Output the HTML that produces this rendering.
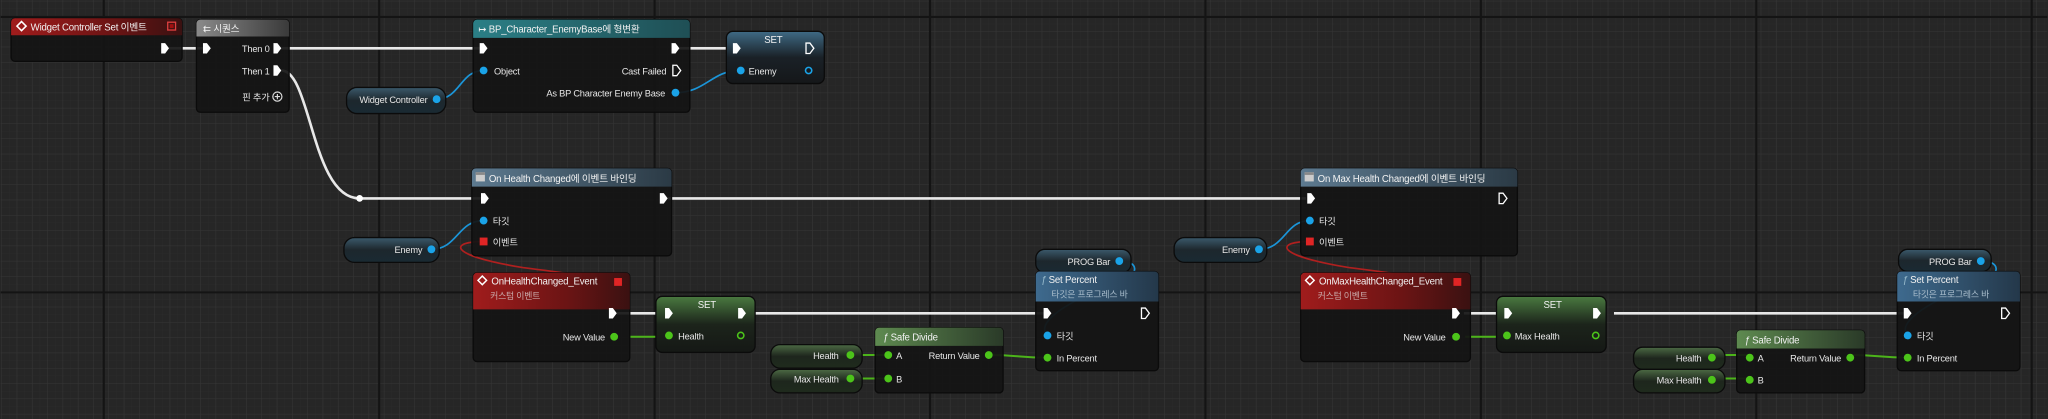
<!DOCTYPE html>
<html><head><meta charset="utf-8"><style>
html,body{margin:0;padding:0;background:#262626;overflow:hidden}
svg{display:block}
text{font-family:"Liberation Sans","Noto Sans CJK KR",sans-serif;font-size:7.1px;letter-spacing:-0.15px;fill:#e6e6e6}
.h{font-size:7.4px;fill:#f2f2f2}
.s{font-size:6.8px;fill:#c9a9a9}
</style></head><body>
<svg width="2048" height="419" viewBox="0 0 1568 321" xmlns="http://www.w3.org/2000/svg">
<defs>
<pattern id="g1" width="5.861" height="5.861" patternUnits="userSpaceOnUse" x="1" y="1">
<path d="M5.861 0V5.861H0" fill="none" stroke="#2b2b2b" stroke-width="0.6"/></pattern>
<pattern id="g2" width="11.72" height="11.72" patternUnits="userSpaceOnUse" x="1" y="1">
<path d="M11.72 0V11.72H0" fill="none" stroke="#353535" stroke-width="0.8"/></pattern>
<linearGradient id="red" x1="0" y1="0" x2="1" y2="0"><stop offset="0" stop-color="#a01c1c"/><stop offset="0.6" stop-color="#6b1414"/><stop offset="1" stop-color="#3a1111"/></linearGradient>
<linearGradient id="gray" x1="0" y1="0" x2="1" y2="0"><stop offset="0" stop-color="#8a8a8a"/><stop offset="1" stop-color="#3a3a3a"/></linearGradient>
<linearGradient id="teal" x1="0" y1="0" x2="1" y2="0"><stop offset="0" stop-color="#2b7f86"/><stop offset="1" stop-color="#1f4f55"/></linearGradient>
<linearGradient id="bg" x1="0" y1="0" x2="1" y2="0"><stop offset="0" stop-color="#5d7a90"/><stop offset="1" stop-color="#2b3a45"/></linearGradient>
<linearGradient id="blue" x1="0" y1="0" x2="1" y2="0"><stop offset="0" stop-color="#3e6a8e"/><stop offset="1" stop-color="#24384a"/></linearGradient>
<linearGradient id="grn" x1="0" y1="0" x2="1" y2="0"><stop offset="0" stop-color="#5e8a50"/><stop offset="1" stop-color="#2a3a28"/></linearGradient>
<linearGradient id="setg" x1="0" y1="0" x2="0" y2="1"><stop offset="0" stop-color="#4a7a40"/><stop offset="0.5" stop-color="#1c241b"/><stop offset="1" stop-color="#151815"/></linearGradient>
<linearGradient id="setb" x1="0" y1="0" x2="0" y2="1"><stop offset="0" stop-color="#3f6a85"/><stop offset="0.5" stop-color="#1a2127"/><stop offset="1" stop-color="#151719"/></linearGradient>
<linearGradient id="varb" x1="0" y1="0" x2="0" y2="1"><stop offset="0" stop-color="#3b5a6c"/><stop offset="0.5" stop-color="#1d272d"/><stop offset="1" stop-color="#1a2a33"/></linearGradient>
<linearGradient id="varg" x1="0" y1="0" x2="0" y2="1"><stop offset="0" stop-color="#4c6a44"/><stop offset="0.5" stop-color="#1e261d"/><stop offset="1" stop-color="#1f2b1d"/></linearGradient>
<path id="ex" d="M-3,-4h3l3,4l-3,4h-3z" fill="#fff"/>
<path id="exo" d="M-3,-4h3l3,4l-3,4h-3z" fill="none" stroke="#fff" stroke-width="1"/>
</defs>
<rect width="1568" height="321" fill="#262626"/>
<rect width="1568" height="321" fill="url(#g1)"/>
<rect width="1568" height="321" fill="url(#g2)"/>
<g stroke="#141414" stroke-width="1.6">
<path d="M0 13H1568M0 224H1568M79 0V321M290 0V321M501 0V321M712 0V321M923 0V321M1134 0V321M1345 0V321M1556 0V321"/>
</g>

<g fill="none" stroke="#e8e8e8" stroke-width="2">
<path d="M129 37H155"/><path d="M215 37H367"/><path d="M520 37H560"/>
<path d="M215 54C238 54 238 152 275 152H368"/><path d="M511 152H1000"/>
<path d="M472 240H509"/><path d="M571 240H799"/>
<path d="M1121 240H1150"/><path d="M1236 240H1458"/>
</g>
<circle cx="275" cy="152" r="2.6" fill="#fff"/>
<g fill="none" stroke="#1b95d8" stroke-width="1.3">
<path d="M334 76C352 76 352 54 370 54"/>
<path d="M517 71C540 71 545 54 566 54"/>
<path d="M330 191C350 191 350 169 370 169"/>
<path d="M964 191C984 191 984 169 1003 169"/>
<path d="M858 200C872 200 872 210 860 215C830 225 790 245 802 257"/>
<path d="M1518 200C1532 200 1532 210 1520 215C1490 225 1450 245 1461 257"/>
</g>
<g fill="none" stroke="#b0201f" stroke-width="1.3">
<path d="M370 185C345 185 340 195 400 205C480 215 490 220 473 216"/>
<path d="M1003 185C978 185 973 195 1033 205C1113 215 1123 220 1112 216"/>
</g>
<g fill="none" stroke="#4cb41a" stroke-width="1.5">
<path d="M482 258H512"/><path d="M652 272H680"/><path d="M652 290H680"/><path d="M757 272C780 272 780 274 802 274"/>
<path d="M1122 258H1153"/><path d="M1312 272H1340"/><path d="M1312 290H1340"/><path d="M1417 272C1440 272 1440 274 1461 274"/>
</g>

<g>
<rect x="8" y="14" width="131" height="33" rx="3" fill="#141414" fill-opacity="0.93" stroke="#0b0b0b"/>
<path d="M11 14h125a3 3 0 0 1 3 3v10H8V17a3 3 0 0 1 3-3z" fill="url(#red)"/>
<path d="M16 16.5l3.5 3.5l-3.5 3.5l-3.5-3.5z" fill="none" stroke="#fff" stroke-width="1.2"/>
<text x="23" y="23.5" class="h">Widget Controller Set 이벤트</text>
<rect x="128" y="17" width="6" height="6" fill="none" stroke="#e04040" stroke-width="1"/><rect x="129.5" y="18.5" width="3" height="3" fill="#a01010"/>
<use href="#ex" x="126" y="37"/>
</g>
<g>
<rect x="150" y="15" width="71" height="71" rx="3" fill="#141414" fill-opacity="0.93" stroke="#0b0b0b"/>
<path d="M153 15h65a3 3 0 0 1 3 3v10H150V18a3 3 0 0 1 3-3z" fill="url(#gray)"/>
<text x="155" y="24.5" class="h">⇇ 시퀀스</text>
<use href="#ex" x="158" y="37"/>
<text x="206" y="40" text-anchor="end">Then 0</text><use href="#ex" x="212" y="37"/>
<text x="206" y="57" text-anchor="end">Then 1</text><use href="#ex" x="212" y="54"/>
<text x="206" y="77" text-anchor="end">핀 추가</text><circle cx="212" cy="74" r="3.5" fill="none" stroke="#ddd" stroke-width="0.9"/><path d="M210 74h4M212 72v4" stroke="#ddd" stroke-width="0.9"/>
</g>
<g>
<rect x="362" y="15" width="166" height="71" rx="3" fill="#141414" fill-opacity="0.93" stroke="#0b0b0b"/>
<path d="M365 15h160a3 3 0 0 1 3 3v11H362V18a3 3 0 0 1 3-3z" fill="url(#teal)"/>
<text x="366" y="25" class="h">↦ BP_Character_EnemyBase에 형변환</text>
<use href="#ex" x="370" y="37"/><use href="#ex" x="517" y="37"/>
<circle cx="370" cy="54" r="3" fill="#1aa3e8"/><text x="378" y="57">Object</text>
<text x="510" y="57" text-anchor="end">Cast Failed</text><use href="#exo" x="518" y="54"/>
<text x="509" y="74" text-anchor="end">As BP Character Enemy Base</text><circle cx="517" cy="71" r="3" fill="#1aa3e8"/>
</g>
<g>
<rect x="556" y="24" width="75" height="40" rx="5" fill="url(#setb)" stroke="#0b0b0b"/>
<text x="592" y="33" text-anchor="middle" class="h">SET</text>
<use href="#ex" x="564" y="37"/><use href="#exo" x="620" y="37"/>
<circle cx="567" cy="54" r="3" fill="#1aa3e8"/><text x="573" y="57">Enemy</text>
<circle cx="619" cy="54" r="2.4" fill="none" stroke="#1aa3e8" stroke-width="1.2"/>
</g>
<g>
<rect x="265" y="67" width="76" height="20" rx="8" fill="url(#varb)" stroke="#0b0b0b"/>
<text x="327" y="79" text-anchor="end">Widget Controller</text><circle cx="334" cy="76" r="3" fill="#1aa3e8"/>
</g>

<g>
<rect x="361" y="129" width="153" height="67" rx="3" fill="#141414" fill-opacity="0.93" stroke="#0b0b0b"/>
<path d="M364 129h147a3 3 0 0 1 3 3v11H361V132a3 3 0 0 1 3-3z" fill="url(#bg)"/>
<rect x="364" y="132" width="7" height="7" fill="#ccc"/><rect x="364" y="132" width="7" height="2" fill="#888"/>
<text x="374" y="139.5" class="h">On Health Changed에 이벤트 바인딩</text>
<use href="#ex" x="371" y="152"/><use href="#ex" x="508" y="152"/>
<circle cx="370" cy="169" r="3" fill="#1aa3e8"/><text x="377" y="172">타깃</text>
<rect x="367" y="182" width="6" height="6" fill="#e02525"/><text x="377" y="188">이벤트</text>
</g>
<g><rect x="263" y="182" width="73" height="19" rx="8" fill="url(#varb)" stroke="#0b0b0b"/>
<text x="323" y="194" text-anchor="end">Enemy</text><circle cx="330" cy="191" r="3" fill="#1aa3e8"/></g>
<g>
<rect x="362" y="209" width="120" height="68" rx="3" fill="#141414" fill-opacity="0.93" stroke="#0b0b0b"/>
<path d="M365 209h114a3 3 0 0 1 3 3v25H362V212a3 3 0 0 1 3-3z" fill="url(#red)"/>
<path d="M369 211.5l3.3 3.3l-3.3 3.3l-3.3-3.3z" fill="none" stroke="#fff" stroke-width="1.1"/>
<text x="376" y="218" class="h">OnHealthChanged_Event</text>
<text x="375" y="229" class="s">커스텀 이벤트</text>
<rect x="470" y="213" width="6" height="6" fill="#e02525"/>
<use href="#ex" x="469" y="240"/>
<text x="463" y="261" text-anchor="end">New Value</text><circle cx="470" cy="258" r="3" fill="#4cc41a"/>
</g>
<g>
<rect x="502" y="227" width="76" height="43" rx="5" fill="url(#setg)" stroke="#0b0b0b"/>
<text x="541" y="236" text-anchor="middle" class="h">SET</text>
<use href="#ex" x="512" y="240"/><use href="#ex" x="568" y="240"/>
<circle cx="512" cy="257" r="3" fill="#4cc41a"/><text x="519" y="260">Health</text>
<circle cx="567" cy="257" r="2.4" fill="none" stroke="#4cc41a" stroke-width="1.2"/>
</g>
<g><rect x="590" y="264" width="70" height="18" rx="7" fill="url(#varg)" stroke="#0b0b0b"/>
<text x="642" y="275" text-anchor="end">Health</text><circle cx="651" cy="272" r="3" fill="#4cc41a"/>
<rect x="590" y="283" width="70" height="18" rx="7" fill="url(#varg)" stroke="#0b0b0b"/>
<text x="642" y="293" text-anchor="end">Max Health</text><circle cx="651" cy="290" r="3" fill="#4cc41a"/></g>
<g>
<rect x="670" y="251" width="98" height="50" rx="3" fill="#141414" fill-opacity="0.93" stroke="#0b0b0b"/>
<path d="M673 251h92a3 3 0 0 1 3 3v11H670V254a3 3 0 0 1 3-3z" fill="url(#grn)"/>
<text x="676" y="261" class="h"><tspan font-style="italic">ƒ</tspan> Safe Divide</text>
<circle cx="680" cy="272" r="3" fill="#4cc41a"/><text x="686" y="275">A</text>
<circle cx="680" cy="290" r="3" fill="#4cc41a"/><text x="686" y="293">B</text>
<text x="750" y="275" text-anchor="end">Return Value</text><circle cx="757" cy="272" r="3" fill="#4cc41a"/>
</g>
<g>
<rect x="793" y="191" width="73" height="18" rx="7" fill="url(#varb)" stroke="#0b0b0b"/>
<text x="850" y="203" text-anchor="end">PROG Bar</text><circle cx="857" cy="200" r="3" fill="#1aa3e8"/>
<rect x="793" y="208" width="94" height="76" rx="3" fill="#141414" fill-opacity="0.95" stroke="#0b0b0b"/>
<path d="M796 208h88a3 3 0 0 1 3 3v20H793V211a3 3 0 0 1 3-3z" fill="url(#blue)"/>
<text x="797" y="217" class="h"><tspan font-style="italic" fill="#9bc">ƒ</tspan> Set Percent</text>
<text x="805" y="228" class="s" style="fill:#a8bccb">타깃은 프로그레스 바</text>
<use href="#ex" x="802" y="240"/><use href="#exo" x="877" y="240"/>
<circle cx="802" cy="257" r="3" fill="#1aa3e8"/><text x="809" y="260">타깃</text>
<circle cx="802" cy="274" r="3" fill="#4cc41a"/><text x="809" y="277">In Percent</text>
</g>

<g>
<rect x="996" y="129" width="166" height="67" rx="3" fill="#141414" fill-opacity="0.93" stroke="#0b0b0b"/>
<path d="M999 129h160a3 3 0 0 1 3 3v11H996V132a3 3 0 0 1 3-3z" fill="url(#bg)"/>
<rect x="999" y="132" width="7" height="7" fill="#ccc"/><rect x="999" y="132" width="7" height="2" fill="#888"/>
<text x="1009" y="139.5" class="h">On Max Health Changed에 이벤트 바인딩</text>
<use href="#ex" x="1004" y="152"/><use href="#exo" x="1151" y="152"/>
<circle cx="1003" cy="169" r="3" fill="#1aa3e8"/><text x="1010" y="172">타깃</text>
<rect x="1000" y="182" width="6" height="6" fill="#e02525"/><text x="1010" y="188">이벤트</text>
</g>
<g><rect x="899" y="182" width="71" height="19" rx="8" fill="url(#varb)" stroke="#0b0b0b"/>
<text x="957" y="194" text-anchor="end">Enemy</text><circle cx="964" cy="191" r="3" fill="#1aa3e8"/></g>
<g>
<rect x="996" y="209" width="130" height="68" rx="3" fill="#141414" fill-opacity="0.93" stroke="#0b0b0b"/>
<path d="M999 209h124a3 3 0 0 1 3 3v25H996V212a3 3 0 0 1 3-3z" fill="url(#red)"/>
<path d="M1003 211.5l3.3 3.3l-3.3 3.3l-3.3-3.3z" fill="none" stroke="#fff" stroke-width="1.1"/>
<text x="1010" y="218" class="h">OnMaxHealthChanged_Event</text>
<text x="1009" y="229" class="s">커스텀 이벤트</text>
<rect x="1113" y="213" width="6" height="6" fill="#e02525"/>
<use href="#ex" x="1115" y="240"/>
<text x="1107" y="261" text-anchor="end">New Value</text><circle cx="1115" cy="258" r="3" fill="#4cc41a"/>
</g>
<g>
<rect x="1146" y="227" width="84" height="43" rx="5" fill="url(#setg)" stroke="#0b0b0b"/>
<text x="1189" y="236" text-anchor="middle" class="h">SET</text>
<use href="#ex" x="1155" y="240"/><use href="#ex" x="1223" y="240"/>
<circle cx="1154" cy="257" r="3" fill="#4cc41a"/><text x="1160" y="260">Max Health</text>
<circle cx="1222" cy="257" r="2.4" fill="none" stroke="#4cc41a" stroke-width="1.2"/>
</g>
<g><rect x="1251" y="266" width="70" height="17" rx="7" fill="url(#varg)" stroke="#0b0b0b"/>
<text x="1303" y="277" text-anchor="end">Health</text><circle cx="1311" cy="274" r="3" fill="#4cc41a"/>
<rect x="1251" y="283" width="70" height="18" rx="7" fill="url(#varg)" stroke="#0b0b0b"/>
<text x="1303" y="294" text-anchor="end">Max Health</text><circle cx="1311" cy="291" r="3" fill="#4cc41a"/></g>
<g>
<rect x="1330" y="253" width="98" height="48" rx="3" fill="#141414" fill-opacity="0.93" stroke="#0b0b0b"/>
<path d="M1333 253h92a3 3 0 0 1 3 3v11H1330V256a3 3 0 0 1 3-3z" fill="url(#grn)"/>
<text x="1336" y="263" class="h"><tspan font-style="italic">ƒ</tspan> Safe Divide</text>
<circle cx="1340" cy="274" r="3" fill="#4cc41a"/><text x="1346" y="277">A</text>
<circle cx="1340" cy="291" r="3" fill="#4cc41a"/><text x="1346" y="294">B</text>
<text x="1410" y="277" text-anchor="end">Return Value</text><circle cx="1417" cy="274" r="3" fill="#4cc41a"/>
</g>
<g>
<rect x="1454" y="191" width="71" height="17" rx="7" fill="url(#varb)" stroke="#0b0b0b"/>
<text x="1510" y="203" text-anchor="end">PROG Bar</text><circle cx="1517" cy="200" r="3" fill="#1aa3e8"/>
<rect x="1453" y="208" width="94" height="76" rx="3" fill="#141414" fill-opacity="0.95" stroke="#0b0b0b"/>
<path d="M1456 208h88a3 3 0 0 1 3 3v20H1453V211a3 3 0 0 1 3-3z" fill="url(#blue)"/>
<text x="1457" y="217" class="h"><tspan font-style="italic" fill="#9bc">ƒ</tspan> Set Percent</text>
<text x="1465" y="228" class="s" style="fill:#a8bccb">타깃은 프로그레스 바</text>
<use href="#ex" x="1461" y="240"/><use href="#exo" x="1536" y="240"/>
<circle cx="1461" cy="257" r="3" fill="#1aa3e8"/><text x="1468" y="260">타깃</text>
<circle cx="1461" cy="274" r="3" fill="#4cc41a"/><text x="1468" y="277">In Percent</text>
</g>
</svg>
</body></html>
